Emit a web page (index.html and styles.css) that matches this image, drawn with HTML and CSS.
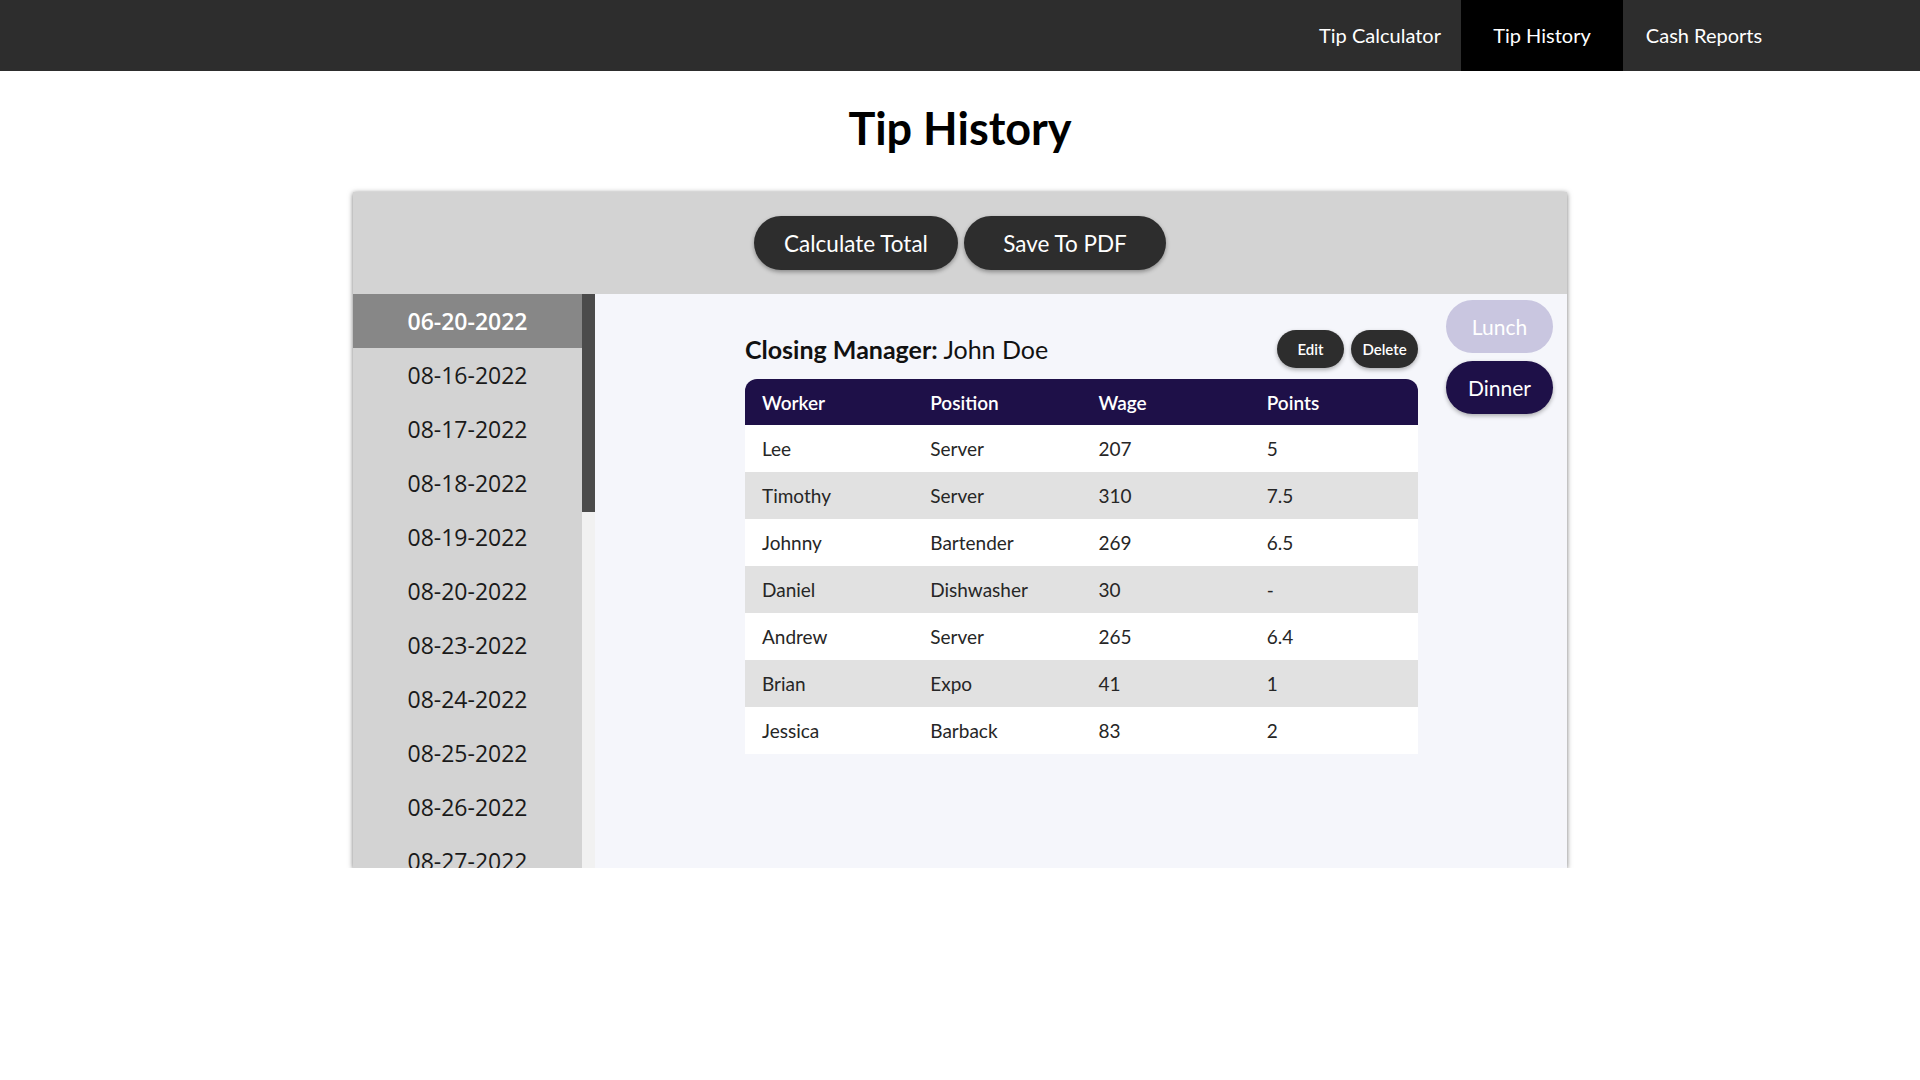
FILE: index.html
```html
<!DOCTYPE html>
<html lang="en">
<head>
<meta charset="utf-8">
<title>Tip History</title>
<link rel="stylesheet" href="styles.css">
</head>
<body>
<nav class="topnav">
  <a class="nav-link" href="#">Tip Calculator</a>
  <a class="nav-link active" href="#">Tip History</a>
  <a class="nav-link" href="#">Cash Reports</a>
</nav>

<h1 class="page-title">Tip History</h1>

<section class="panel">
  <div class="panel-head">
    <button class="pill-btn calc">Calculate Total</button>
    <button class="pill-btn pdf">Save To PDF</button>
  </div>
  <div class="panel-body">
    <div class="sidebar">
      <ul class="dates">
        <li class="date active">06-20-2022</li>
        <li class="date">08-16-2022</li>
        <li class="date">08-17-2022</li>
        <li class="date">08-18-2022</li>
        <li class="date">08-19-2022</li>
        <li class="date">08-20-2022</li>
        <li class="date">08-23-2022</li>
        <li class="date">08-24-2022</li>
        <li class="date">08-25-2022</li>
        <li class="date">08-26-2022</li>
        <li class="date">08-27-2022</li>
      </ul>
      <div class="scrollbar"><div class="scroll-thumb"></div></div>
    </div>
    <div class="content">
      <div class="main">
        <div class="main-head">
          <h2 class="manager"><span class="manager-label">Closing Manager:</span> John Doe</h2>
          <div class="actions">
            <button class="small-btn">Edit</button>
            <button class="small-btn">Delete</button>
          </div>
        </div>
        <table class="tips">
          <thead>
            <tr><th>Worker</th><th>Position</th><th>Wage</th><th>Points</th></tr>
          </thead>
          <tbody>
            <tr><td>Lee</td><td>Server</td><td>207</td><td>5</td></tr>
            <tr><td>Timothy</td><td>Server</td><td>310</td><td>7.5</td></tr>
            <tr><td>Johnny</td><td>Bartender</td><td>269</td><td>6.5</td></tr>
            <tr><td>Daniel</td><td>Dishwasher</td><td>30</td><td>-</td></tr>
            <tr><td>Andrew</td><td>Server</td><td>265</td><td>6.4</td></tr>
            <tr><td>Brian</td><td>Expo</td><td>41</td><td>1</td></tr>
            <tr><td>Jessica</td><td>Barback</td><td>83</td><td>2</td></tr>
          </tbody>
        </table>
      </div>
      <div class="shifts">
        <button class="shift-btn lunch">Lunch</button>
        <button class="shift-btn dinner">Dinner</button>
      </div>
    </div>
  </div>
</section>
</body>
</html>
```

FILE: styles.css
```css
* { box-sizing: border-box; }

body {
  margin: 0;
  background: #ffffff;
  font-family: Lato, "Noto Sans", sans-serif;
  color: #111;
}

.topnav {
  height: 71px;
  background: #2d2d2d;
  display: flex;
  justify-content: flex-end;
  padding-right: 135px;
}

.nav-link {
  width: 162px;
  display: flex;
  align-items: center;
  justify-content: center;
  color: #ffffff;
  text-decoration: none;
  font-size: 20px;
  padding-bottom: 2px;
}

.nav-link.active { background: #000000; }

.page-title {
  margin: 30px 0 37px;
  text-align: center;
  font-size: 45px;
  line-height: 54px;
  font-weight: 700;
  color: #000;
}

.panel {
  width: 1214px;
  margin: 0 auto;
  box-shadow: 0 1px 5px rgba(0, 0, 0, 0.55);
}

.panel-head {
  height: 102px;
  background: #d3d3d3;
  display: flex;
  align-items: center;
  justify-content: center;
  gap: 6px;
}

.pill-btn {
  height: 54px;
  padding: 0;
  border: none;
  border-radius: 27px;
  background: #2d2d2d;
  color: #fff;
  font-family: Lato, "Noto Sans", sans-serif;
  font-size: 22.5px;
  box-shadow: 0 2px 4px rgba(0, 0, 0, 0.35);
}

.pill-btn.calc { width: 204px; }
.pill-btn.pdf { width: 202px; }

.panel-body {
  height: 574px;
  display: flex;
  background: #f5f6fb;
}

.sidebar {
  width: 242px;
  flex: none;
  display: flex;
  overflow: hidden;
}

.dates {
  width: 229px;
  flex: none;
  margin: 0;
  padding: 0;
  list-style: none;
  background: #d3d3d3;
}

.scrollbar {
  width: 13px;
  flex: none;
  background: #f1f1f1;
}

.scroll-thumb {
  height: 218px;
  background: #4b4b4b;
}

.date {
  height: 54px;
  line-height: 54px;
  text-align: center;
  font-family: "Open Sans", "Noto Sans", sans-serif;
  font-size: 23px;
  color: #1a1a1a;
}

.date.active {
  background: #878787;
  color: #fff;
  font-weight: 600;
}

.content {
  flex: 1;
  display: flex;
  padding: 6px 14px 0 150px;
}

.main {
  width: 673px;
  margin-top: 30px;
}

.main-head {
  height: 38px;
  display: flex;
  align-items: center;
  justify-content: space-between;
  margin-bottom: 11px;
}

.manager {
  margin: 0;
  font-size: 25px;
  font-weight: 400;
  color: #111;
}

.manager-label { font-weight: 700; }

.actions { display: flex; gap: 7px; }

.small-btn {
  width: 67px;
  height: 38px;
  border: none;
  border-radius: 19px;
  background: #2d2d2d;
  color: #fff;
  font-family: Lato, "Noto Sans", sans-serif;
  font-size: 15px;
  font-weight: 600;
  box-shadow: 0 2px 4px rgba(0, 0, 0, 0.3);
}

.tips {
  width: 673px;
  border-collapse: separate;
  border-spacing: 0;
  table-layout: fixed;
}

.tips th {
  height: 46px;
  background: #1e1048;
  color: #fff;
  font-size: 19px;
  font-weight: 600;
  text-align: left;
  padding: 0 0 0 17px;
}

.tips th:first-child { border-top-left-radius: 12px; }
.tips th:last-child { border-top-right-radius: 12px; }

.tips td {
  height: 47px;
  padding: 0 0 0 17px;
  font-size: 19px;
  font-weight: 400;
  color: #262626;
  background: #ffffff;
}

.tips tbody tr:nth-child(even) td { background: #e1e1e1; }

.shifts {
  width: 107px;
  margin-left: 28px;
  display: flex;
  flex-direction: column;
  gap: 8px;
}

.shift-btn {
  height: 53px;
  border: none;
  border-radius: 27px;
  color: #fff;
  font-family: Lato, "Noto Sans", sans-serif;
  font-size: 21px;
}

.shift-btn.lunch { background: #c9c6e0; }
.shift-btn.dinner {
  background: #1e1048;
  box-shadow: 0 2px 4px rgba(0, 0, 0, 0.3);
}
```
